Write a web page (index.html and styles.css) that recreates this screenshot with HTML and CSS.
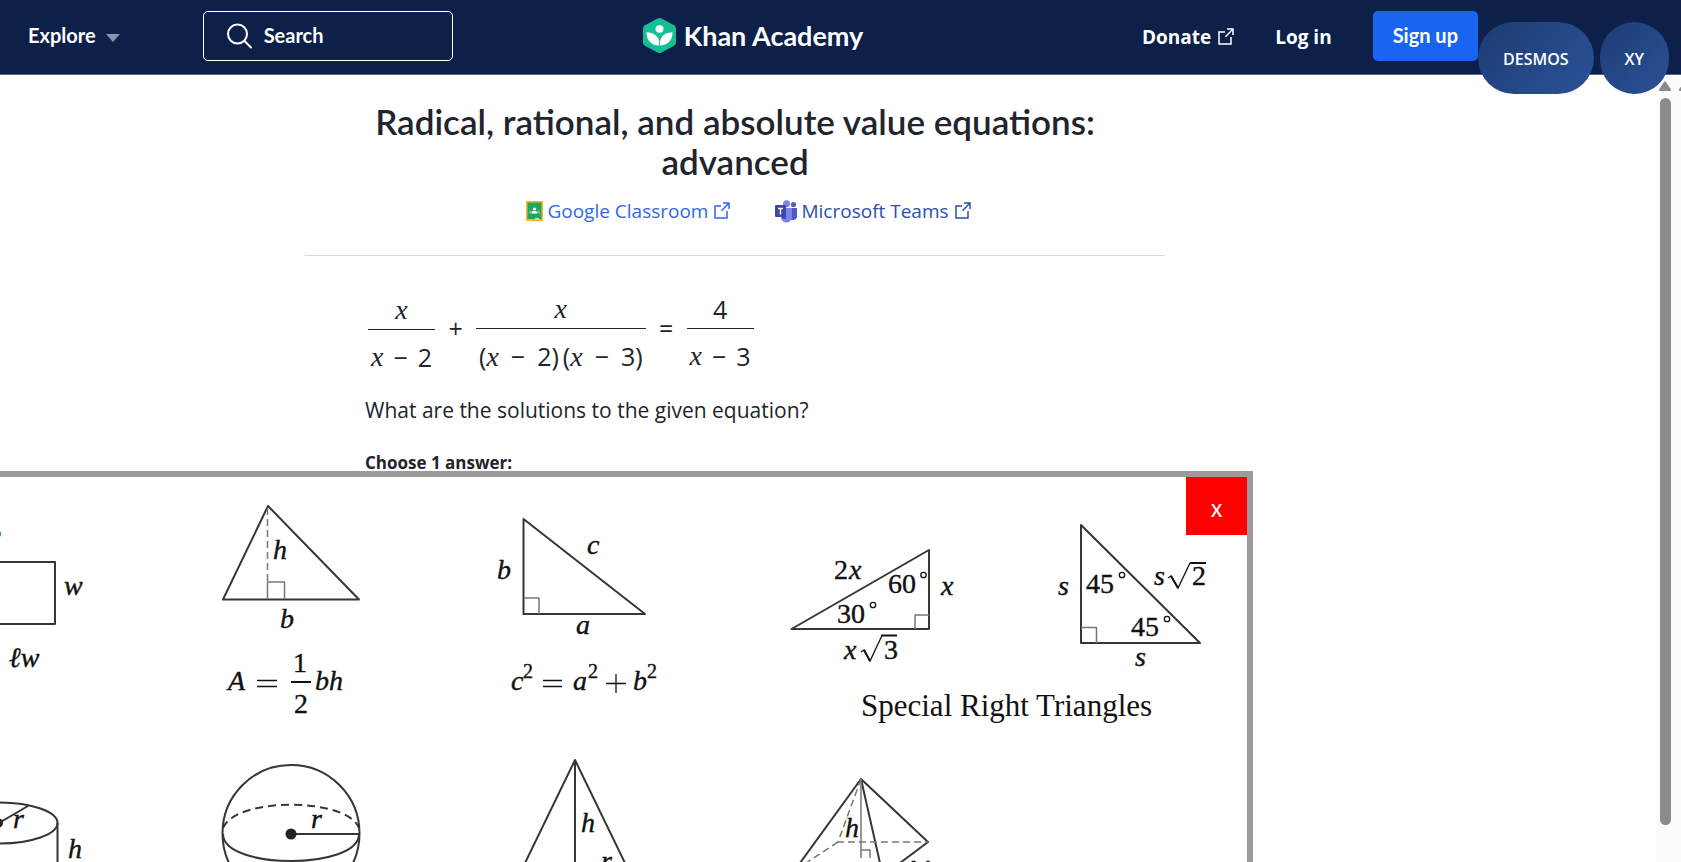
FILE: index.html
```html
<!DOCTYPE html>
<html lang="en">
<head>
<meta charset="utf-8">
<title>Radical, rational, and absolute value equations: advanced | Khan Academy</title>
<link rel="stylesheet" href="styles.css">
</head>
<body>
<header class="topbar">
  <div class="topbar-left">
    <button class="explore" type="button">Explore
      <svg class="caret" viewBox="0 0 14 8" aria-hidden="true"><path d="M0 0h14L7 8z"/></svg>
    </button>
    <label class="search">
      <svg class="search-icon" viewBox="0 0 25 26" aria-hidden="true"><circle cx="10.500" cy="11" r="9.500"/><path d="M17.500 18l6.500 6.500"/></svg>
      <input type="text" placeholder="Search" aria-label="Search">
    </label>
  </div>
  <a class="logo" href="#">
    <svg class="logo-mark" viewBox="0 0 33 38" preserveAspectRatio="none" aria-hidden="true">
      <path fill="#14bf96" d="M14.500.600q2-1.100 4 0l12.500 7.200q2 1.200 2 3.500v15.400q0 2.300-2 3.500l-12.500 7.200q-2 1.100-4 0L2 30.200q-2-1.200-2-3.500V11.300Q0 9 2 7.800z"/>
      <circle cx="16.500" cy="12" r="4" fill="#fff"/>
      <path fill="#fff" d="M3.500 15.500c7 0 12 4 13 11 1-7 6-11 13-11 0 8-4 14.300-13 14.300S3.500 23.500 3.500 15.500z"/>
      <path fill="none" stroke="#14bf96" stroke-width="1" d="M16.500 29.800c-.5-4 .3-7 2-9"/>
    </svg>
    <span>Khan Academy</span>
  </a>
  <nav class="topbar-right">
    <a class="nav-link" href="#">Donate
      <svg class="ext" viewBox="0 0 16 17" aria-hidden="true"><path d="M7 4H1v12h12V9M9 1h6v6M15 1L7.500 8.700"/></svg>
    </a>
    <a class="nav-link" href="#">Log in</a>
    <a class="signup" href="#">Sign up</a>
  </nav>
</header>
<div class="pills">
  <button type="button" class="pill">DESMOS</button>
  <button type="button" class="pill">XY</button>
</div>
<div class="page">
  <main class="exercise">
    <h1>Radical, rational, and absolute value equations: advanced</h1>
    <div class="shares">
      <a class="share google" href="#">
        <svg class="gc" viewBox="0 0 17 20" aria-hidden="true"><rect width="17" height="20" fill="#fbbc14"/><rect x="1.500" y="1.500" width="14" height="16.500" fill="#23a566"/><circle cx="8.500" cy="8" r="1.500" fill="#fff"/><path fill="#fff" d="M5.500 12.500c0-3.600 6-3.600 6 0z"/><path fill="#7fcba6" d="M3 12.500c0-3 2-3 3-2.500l-1 2.500zM14 12.500c0-3-2-3-3-2.500l1 2.500z"/><path fill="#e4efe8" d="M9 17h4v1.200H9z"/></svg>
        <span>Google Classroom</span>
        <svg class="ext" viewBox="0 0 16 17" aria-hidden="true"><path d="M7 4H1v12h12V9M9 1h6v6M15 1L7.500 8.700"/></svg>
      </a>
      <a class="share teams" href="#">
        <svg class="ms" viewBox="0 0 22 23" aria-hidden="true"><circle cx="18.500" cy="4.500" r="2.600" fill="#5059c9"/><path fill="#5059c9" d="M14 8h8v7.500a4 4 0 0 1-8 1z"/><circle cx="11.500" cy="3.700" r="3.500" fill="#7b83eb"/><path fill="#7b83eb" d="M6 8h11v9a5.500 5.500 0 0 1-11 0z"/><path fill="#484fb8" d="M6 8h5v11H7z"/><rect y="5" width="11" height="12" rx="1" fill="#3f46ae"/><path fill="none" stroke="#fff" stroke-width="1.400" d="M3 8.500h5M5.500 8.500v6"/></svg>
        <span>Microsoft Teams</span>
        <svg class="ext" viewBox="0 0 16 17" aria-hidden="true"><path d="M7 4H1v12h12V9M9 1h6v6M15 1L7.500 8.700"/></svg>
      </a>
    </div>
    <section class="question">
      <div class="equation">
        <span class="frac"><span class="num"><i>x</i></span><span class="den"><i>x</i><b>−</b><span>2</span></span></span>
        <span class="op">+</span>
        <span class="frac"><span class="num"><i>x</i></span><span class="den wide"><span>(<i>x</i></span><b>−</b><span>2)</span><span class="tight">(<i>x</i></span><b>−</b><span>3)</span></span></span>
        <span class="op">=</span>
        <span class="frac"><span class="num">4</span><span class="den"><i>x</i><b>−</b><span>3</span></span></span>
      </div>
      <p class="prompt">What are the solutions to the given equation?</p>
      <p class="choose">Choose 1 answer:</p>
    </section>
  </main>
  <div class="scrollbar" aria-hidden="true">
    <div class="track"><svg class="arrow" viewBox="0 0 12 10"><path d="M5 1q1-1.500 2 0l5 7.500q.3 1.500-1 1.500H1q-1.300 0-1-1.500z"/></svg><div class="thumb"></div></div>
    <svg class="arrow" viewBox="0 0 12 10"><path d="M5 1q1-1.500 2 0l5 7.500q.3 1.500-1 1.500H1q-1.300 0-1-1.500z"/></svg>
  </div>
</div>
<aside class="reference">
  <button type="button" class="close" aria-label="Close">X</button>
  <svg class="figures" viewBox="0 477 1247 385" width="1247" height="385">
    <g class="shape">
      <path d="M0 562H55V624H0"/>
      <path d="M268 506L223 599.500H359z"/>
      <path class="thin" d="M267.500 599V582H284.500V599"/>
      <path class="thin dash" d="M267.500 508V582"/>
      <path d="M523.500 519V614H645z"/>
      <path class="thin" d="M524 598H539V614"/>
      <path d="M791.500 629L929 550V629z"/>
      <path class="thin" d="M915 629V615H929"/>
      <path d="M1081 525V643H1200z"/>
      <path class="thin" d="M1081 627.500H1096.500V643"/>
      <ellipse cx="-1" cy="823" rx="58.500" ry="20.500"/>
      <path d="M-1 823L28 806M57.500 823V862"/>
      <circle cx="291" cy="833.500" r="68.500"/>
      <path d="M223 834C223 870 359 870 359 834M291 834H359"/>
      <path class="dashed" d="M223 828C235 797 347 797 359 828"/>
      <path d="M525 863L575 760L625 863M575 760V863"/>
      <path d="M800 863L861 779L928 842L900 863M861 779L880 863"/>
      <path class="thin" d="M861 779V858M861 850H870V858"/>
      <path class="thin dash" d="M861 779L838 842H928M838 842L806 863"/>
    </g>
    <circle class="dot" cx="-2" cy="823" r="5"/>
    <circle class="dot" cx="291" cy="834" r="5.500"/>
    <ellipse class="blue" cx="-1" cy="534" rx="2" ry="3"/>
    <g class="math">
      <text x="64" y="595">w</text><text x="9" y="667">ℓw</text>
      <text x="273" y="559">h</text><text x="280" y="628">b</text>
      <text x="228" y="690">A</text><text x="315" y="690">bh</text>
      <text x="13" y="828">r</text><text x="68" y="858">h</text><text x="311" y="828">r</text>
      <text x="497" y="579">b</text><text x="587" y="554">c</text><text x="576" y="634">a</text>
      <text x="511" y="690">c</text><text x="573" y="690">a</text><text x="633" y="690">b</text>
      <text x="581" y="832">h</text><text x="601" y="870">r</text>
      <text x="849" y="579">x</text><text x="941" y="595">x</text><text x="844" y="659">x</text>
      <text x="1058" y="595">s</text><text x="1154" y="585">s</text><text x="1135" y="666">s</text>
      <text x="845" y="837">h</text><text x="911" y="874">w</text>
    </g>
    <g class="upright">
      <text x="293" y="672">1</text><text x="294" y="713">2</text>
      <text x="834" y="579">2</text><text x="888" y="593">60</text><text x="837" y="623">30</text><text x="884" y="659">3</text>
      <text x="1086" y="593">45</text><text x="1131" y="636">45</text><text x="1192" y="585">2</text>
      <text class="sup" x="523" y="678">2</text><text class="sup" x="588" y="678">2</text><text class="sup" x="647" y="678">2</text>
      <text class="caption" x="861" y="716">Special Right Triangles</text>
    </g>
    <g class="rule">
      <path d="M257 680.500H277M257 686.500H277M543 680.500H562M543 686.500H562M606 683.500H626M616 674V693"/>
      <path class="thick" d="M291 682H311M881 635.500H897M1190 563H1206"/>
      <path d="M861 652L864 650L870 661L882 635.500M1168 578L1171 576L1178 588L1190 563"/>
      <path class="thick" d="M864 650L870 661M1171 576L1178 588"/>
      <circle cx="923.500" cy="575" r="2.700"/><circle cx="873" cy="605" r="2.700"/><circle cx="1122" cy="575" r="2.700"/><circle cx="1167" cy="619" r="2.700"/>
    </g>
  </svg>
</aside>
</body>
</html>
```
FILE: styles.css
```css
* { box-sizing: border-box; }
body {
  margin: 0;
  height: 100vh;
  display: flex;
  flex-direction: column;
  overflow: hidden;
  position: relative;
  background: #fff;
  color: #21242c;
  font-family: "Open Sans", "Noto Sans", sans-serif;
}
button, input { font: inherit; color: inherit; }
a { color: inherit; text-decoration: none; }
h1, p { margin: 0; }

.topbar {
  flex: none;
  height: 75px;
  display: grid;
  grid-template-columns: 1fr auto 1fr;
  align-items: start;
  padding: 11px 203px 0 28px;
  background: #0c204a;
  border-bottom: 1px solid #56658a;
  color: #fff;
}
.topbar-left, .topbar-right, .explore, .search, .logo, .nav-link, .signup { display: flex; align-items: center; }
.topbar-left { gap: 83px; font: 700 20px Lato, sans-serif; }
.explore { gap: 10px; height: 50px; padding: 0 0 2px; border: 0; background: none; }
.caret { width: 14px; height: 8px; fill: #8992aa; margin-top: 5px; }
.search { width: 250px; height: 50px; gap: 12px; padding: 0 23px; border: 1px solid #fff; border-radius: 5px; }
.search-icon { flex: none; width: 25px; height: 26px; fill: none; stroke: #fff; stroke-width: 2; stroke-linecap: round; }
.search input { width: 100%; padding: 0 0 3px; border: 0; outline: 0; background: none; }
.search input::placeholder { color: #fff; opacity: 1; }
.logo { gap: 8px; height: 50px; padding-bottom: 2px; font: 700 27px Lato, sans-serif; }
.logo-mark { width: 33px; height: 35px; }
.topbar-right { justify-content: flex-end; gap: 41px; }
.nav-link { gap: 7px; padding-top: 2px; font-size: 19px; font-weight: 700; }
.ext { width: 16px; height: 17px; fill: none; stroke: currentColor; stroke-width: 1.500; margin-bottom: 2px; }
.signup { height: 50px; padding: 0 20px 3px; border-radius: 5px; background: #1865f2; font: 700 20px Lato, sans-serif; }

.pills { position: absolute; top: 22px; right: 12px; display: flex; gap: 6px; }
.pill {
  height: 72px;
  padding: 1px 25px 0;
  border: 0;
  border-radius: 36px;
  background: linear-gradient(135deg, #1e3c72, #2a5298);
  color: #fff;
  font-size: 16px;
  font-weight: 600;
}

.page { flex: 1; display: flex; min-height: 0; }
.exercise { flex: 1; padding: 26px 186px 0 0; }
.exercise h1 { max-width: 760px; margin: 0 auto; font: 600 35px/40px Lato, sans-serif; text-align: center; }
.shares {
  display: flex;
  justify-content: center;
  gap: 45px;
  max-width: 860px;
  height: 69px;
  margin: 6px auto 0;
  padding-left: 27px;
  border-bottom: 1px solid #d8d9db;
}
.share { display: flex; align-items: center; height: 48px; gap: 4px; font-size: 19px; }
.share .ext { margin-left: 2px; }
.google { color: #3366e8; }
.teams { color: #2b50ad; }
.gc { width: 17px; height: 20px; }
.ms { width: 22px; height: 23px; }
.question { max-width: 860px; margin: 0 auto; padding: 35px 60px 0; }

.equation { display: flex; align-items: center; padding-left: 3px; font-size: 25px; line-height: 34px; }
.frac { display: flex; flex-direction: column; align-items: center; }
.num { padding-bottom: 2px; }
.den { display: flex; gap: 10px; padding: 10px 3px 0; border-top: 1px solid #21242c; }
.wide { gap: 12px; }
.tight { margin-left: -8px; }
.equation i { font-family: "Liberation Serif", serif; font-size: 28px; }
.den b { font-weight: 400; }
.op { width: 41px; padding-bottom: 10px; text-align: center; }
.prompt { margin-top: 21px; font-size: 21px; line-height: 30px; }
.choose { margin-top: 25px; font-size: 17px; line-height: 26px; font-weight: 700; }

.scrollbar { flex: none; width: 25px; display: flex; gap: 8px; padding: 6px 0 0 3px; overflow: hidden; background: #fcfcfc; }
.arrow { flex: none; width: 12px; height: 10px; fill: #8b8b8b; }
.track { display: flex; flex-direction: column; align-items: center; gap: 7px; padding-bottom: 37px; }
.thumb { flex: 1; width: 11px; border-radius: 6px; background: #8b8b8b; }

.reference {
  position: absolute;
  top: 471px;
  left: 0;
  right: 428px;
  bottom: 0;
  overflow: hidden;
  border: solid #9a9b9a;
  border-width: 6px 6px 0 0;
  background: #fff;
}
.close { position: absolute; top: 0; right: 0; width: 61px; height: 58px; padding: 8px 0 0; border: 0; background: #f00; color: #fff; font-size: 18px; font-weight: 600; }
.figures { display: block; }
.shape { fill: none; stroke: #363636; stroke-width: 2; stroke-linejoin: round; }
.thin { stroke: #777; stroke-width: 1.500; }
.dash { stroke-dasharray: 7 4; }
.dashed { stroke-dasharray: 8 5; }
.dot { fill: #222; }
.blue { fill: #1a86d0; }
.math, .upright { font-family: "Liberation Serif", serif; font-size: 28px; fill: #111; stroke: #111; stroke-width: 0.4; }
.math { font-style: italic; }
.sup { font-size: 20px; }
.caption { font-size: 31px; stroke: none; }
.rule { fill: none; stroke: #111; stroke-width: 1.300; }
.thick { stroke-width: 2; }
```
